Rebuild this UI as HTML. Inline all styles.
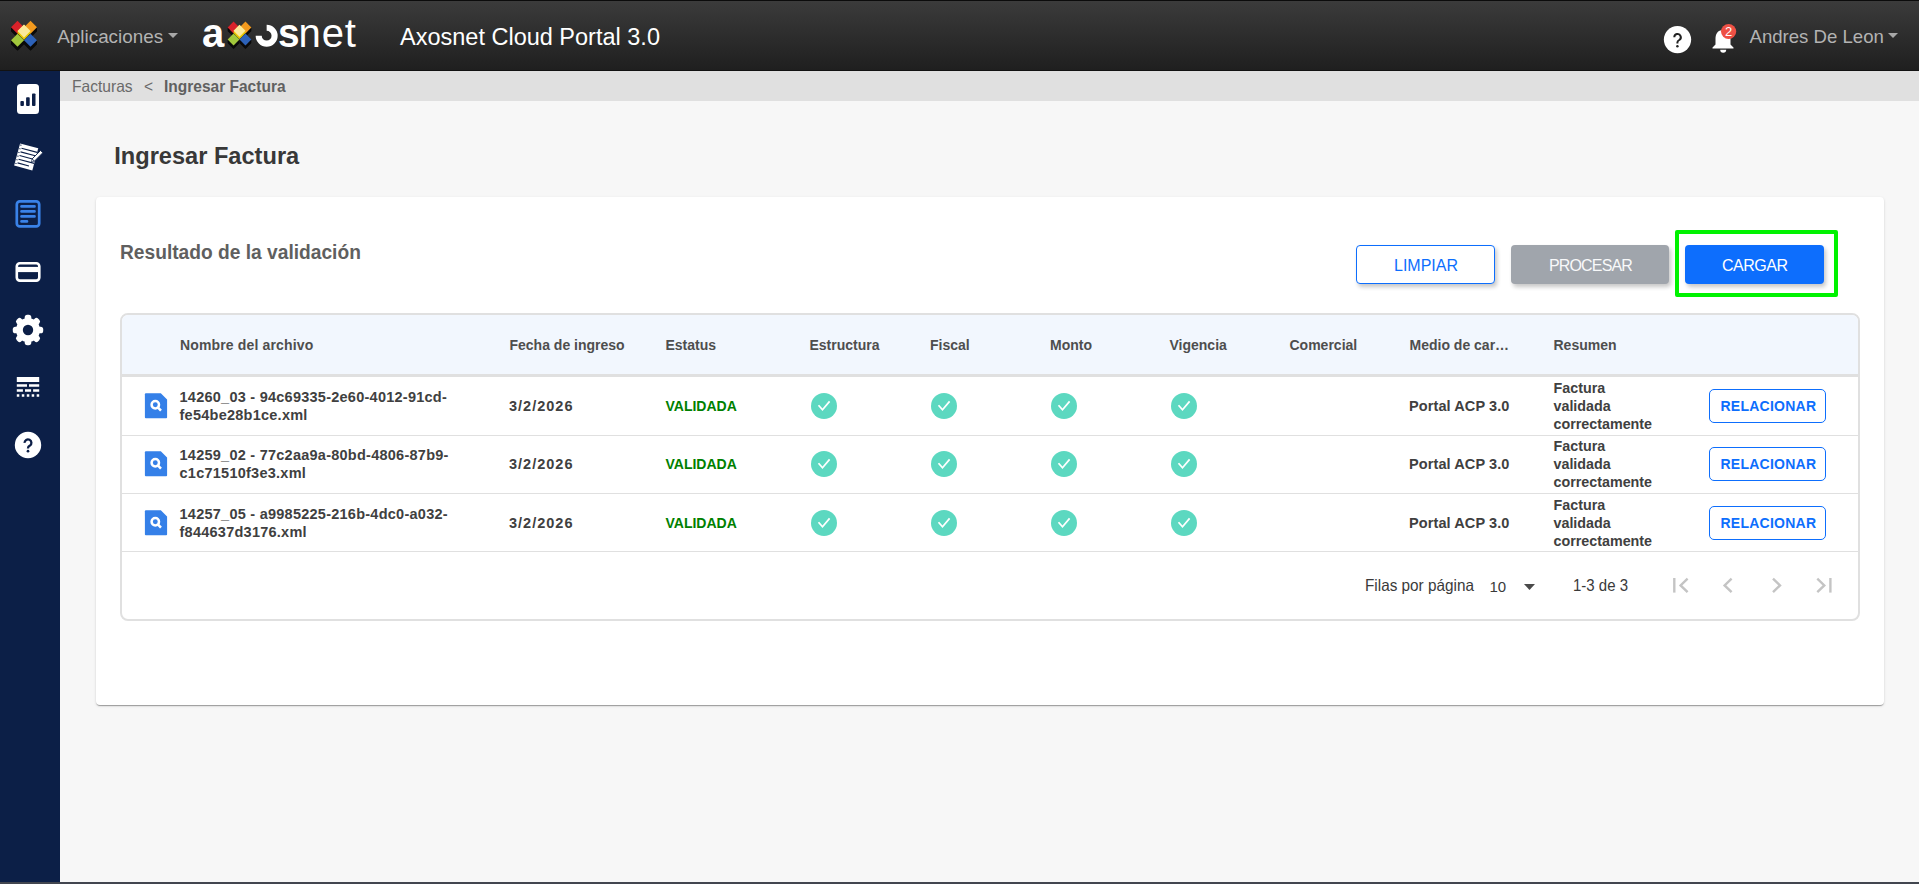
<!DOCTYPE html>
<html><head><meta charset="utf-8">
<style>
*{box-sizing:border-box;margin:0;padding:0}
html,body{width:1919px;height:884px;overflow:hidden;background:#f7f7f7;font-family:"Liberation Sans",sans-serif}
.a{position:absolute;white-space:nowrap;line-height:1}
#hdr{position:absolute;left:0;top:0;width:1919px;height:71px;background:linear-gradient(#3b3b3b,#1f1f1f);border-top:1px solid #0b0b0b;border-bottom:1px solid #121212}
#side{position:absolute;left:0;top:71px;width:60px;height:813px;background:#0c1f47}
#bc{position:absolute;left:60px;top:71px;width:1859px;height:30px;background:#e0e0e0}
#card{position:absolute;left:96px;top:197px;width:1788px;height:508px;background:#fff;border-radius:4px;box-shadow:0 2px 1px -1px rgba(0,0,0,.2),0 1px 1px 0 rgba(0,0,0,.14),0 1px 3px 0 rgba(0,0,0,.12)}
.btn{position:absolute;top:245px;height:39px;border-radius:4px;box-shadow:2px 3px 4px rgba(0,0,0,.22)}
#tbl{position:absolute;left:120px;top:313px;width:1740px;height:308px;border:2px solid #e0e0e0;border-radius:8px;overflow:hidden;background:#fff}
.th{font-weight:700;font-size:14px;color:#4e4e4e}
.td{font-weight:700;font-size:14px;color:#404040}
.rel{position:absolute;left:1709px;width:117px;height:34px;border:1.5px solid #0d6efd;border-radius:5px;background:#fff}
</style></head><body>
<div id="hdr"></div>
<div id="side"></div>
<div id="bc"></div>
<svg class="a" style="left:0;top:0" width="60" height="480" viewBox="0 0 60 480">
<rect x="17" y="84" width="22" height="30" rx="3.5" fill="#fff"/>
<g fill="#0c1f47"><rect x="20.4" y="101.1" width="3.5" height="4.8" rx="0.9"/><rect x="26.1" y="97.2" width="3.6" height="8.7" rx="0.9"/><rect x="32" y="93.4" width="3.5" height="12.5" rx="0.9"/></g>
<g transform="translate(26.2,156.9) rotate(15)">
  <rect x="-9.4" y="-11.45" width="18.8" height="22.9" fill="#fff"/>
  <path d="M-6.8 -7.2H9.4M-6.8 -3.4H9.4M-6.8 0.4H9.4M-6.8 4.2H9.4M-6.8 8H5" stroke="#0c1f47" stroke-width="1.1"/>
  <path d="M-8.2 -10.5V10.5" stroke="#0c1f47" stroke-width="1.3" stroke-dasharray="1 2.8"/>
</g>
<g transform="translate(36.2,157.1) rotate(45)">
  <rect x="-1.6" y="-7.8" width="3.2" height="12" fill="#fff" stroke="#0c1f47" stroke-width="0.9"/>
  <path d="M-1.6 4.2L0 6.8L1.6 4.2Z" fill="#fff" stroke="#0c1f47" stroke-width="0.6"/>
</g>
<rect x="16.8" y="201.4" width="22.4" height="25" rx="3" fill="none" stroke="#3a82e8" stroke-width="2.7"/>
<path d="M21.5 206.4H34.5M21.5 211.4H34.5M21.5 216.4H34.5M21.5 221.4H27" stroke="#3a82e8" stroke-width="2.7" stroke-linecap="round"/>
<rect x="16.8" y="263.3" width="22.5" height="17.3" rx="3" fill="none" stroke="#fff" stroke-width="2.6"/>
<rect x="16" y="266.9" width="24" height="5.2" fill="#fff"/>
<g transform="translate(28,330)" fill="#fff"><circle r="12"/><rect x="-3.3" y="-15.2" width="6.6" height="8" rx="2.6" transform="rotate(0)"/><rect x="-3.3" y="-15.2" width="6.6" height="8" rx="2.6" transform="rotate(45)"/><rect x="-3.3" y="-15.2" width="6.6" height="8" rx="2.6" transform="rotate(90)"/><rect x="-3.3" y="-15.2" width="6.6" height="8" rx="2.6" transform="rotate(135)"/><rect x="-3.3" y="-15.2" width="6.6" height="8" rx="2.6" transform="rotate(180)"/><rect x="-3.3" y="-15.2" width="6.6" height="8" rx="2.6" transform="rotate(225)"/><rect x="-3.3" y="-15.2" width="6.6" height="8" rx="2.6" transform="rotate(270)"/><rect x="-3.3" y="-15.2" width="6.6" height="8" rx="2.6" transform="rotate(315)"/><circle r="5.2" fill="#0c1f47"/></g>
<rect x="16.8" y="377" width="22.4" height="5" fill="#fff"/>
<path d="M16.8 385.5H27M29 385.5H39.2M16.8 390.5H22.9M25 390.5H31.1M33.1 390.5H39.2" stroke="#fff" stroke-width="2.7"/>
<path d="M16.8 395.5H19.3M21.8 395.5H24.3M26.8 395.5H29.3M31.7 395.5H34.2M36.7 395.5H39.2" stroke="#fff" stroke-width="2.7"/>
<circle cx="28" cy="445" r="13.2" fill="#fff"/>
<path d="M24.6 442.9A3.4 3.4 0 1 1 29.95 445.6Q28 446.7 28 448.2V448.5" fill="none" stroke="#0c1f47" stroke-width="2.3"/>
<circle cx="28" cy="451.2" r="1.35" fill="#0c1f47"/>
</svg>
<div class="a" style="left:0;top:882px;width:1919px;height:2px;background:#42464f"></div>

<!-- header content -->
<svg class="a" style="left:0;top:0" width="60" height="70" viewBox="0 0 60 70"><g transform="translate(24,33.7)"><g transform="translate(0,0.5) rotate(45)" fill="#0a0a0a"><rect x="-13.799999999999999" y="-4.6" width="9.2" height="9.2"/><rect x="-4.6" y="-13.799999999999999" width="9.2" height="9.2"/><rect x="-4.6" y="4.6" width="9.2" height="9.2"/><rect x="4.6" y="-4.6" width="9.2" height="9.2"/></g><g transform="translate(0,1.0) rotate(45)" fill="#0a0a0a"><rect x="-13.799999999999999" y="-4.6" width="9.2" height="9.2"/><rect x="-4.6" y="-13.799999999999999" width="9.2" height="9.2"/><rect x="-4.6" y="4.6" width="9.2" height="9.2"/><rect x="4.6" y="-4.6" width="9.2" height="9.2"/></g><g transform="translate(0,1.5) rotate(45)" fill="#0a0a0a"><rect x="-13.799999999999999" y="-4.6" width="9.2" height="9.2"/><rect x="-4.6" y="-13.799999999999999" width="9.2" height="9.2"/><rect x="-4.6" y="4.6" width="9.2" height="9.2"/><rect x="4.6" y="-4.6" width="9.2" height="9.2"/></g><g transform="translate(0,2.0) rotate(45)" fill="#0a0a0a"><rect x="-13.799999999999999" y="-4.6" width="9.2" height="9.2"/><rect x="-4.6" y="-13.799999999999999" width="9.2" height="9.2"/><rect x="-4.6" y="4.6" width="9.2" height="9.2"/><rect x="4.6" y="-4.6" width="9.2" height="9.2"/></g><g transform="translate(0,2.5) rotate(45)" fill="#0a0a0a"><rect x="-13.799999999999999" y="-4.6" width="9.2" height="9.2"/><rect x="-4.6" y="-13.799999999999999" width="9.2" height="9.2"/><rect x="-4.6" y="4.6" width="9.2" height="9.2"/><rect x="4.6" y="-4.6" width="9.2" height="9.2"/></g><g transform="translate(0,3.0) rotate(45)" fill="#0a0a0a"><rect x="-13.799999999999999" y="-4.6" width="9.2" height="9.2"/><rect x="-4.6" y="-13.799999999999999" width="9.2" height="9.2"/><rect x="-4.6" y="4.6" width="9.2" height="9.2"/><rect x="4.6" y="-4.6" width="9.2" height="9.2"/></g><g transform="translate(0,3.5) rotate(45)" fill="#0a0a0a"><rect x="-13.799999999999999" y="-4.6" width="9.2" height="9.2"/><rect x="-4.6" y="-13.799999999999999" width="9.2" height="9.2"/><rect x="-4.6" y="4.6" width="9.2" height="9.2"/><rect x="4.6" y="-4.6" width="9.2" height="9.2"/></g><g transform="translate(0,4.0) rotate(45)" fill="#0a0a0a"><rect x="-13.799999999999999" y="-4.6" width="9.2" height="9.2"/><rect x="-4.6" y="-13.799999999999999" width="9.2" height="9.2"/><rect x="-4.6" y="4.6" width="9.2" height="9.2"/><rect x="4.6" y="-4.6" width="9.2" height="9.2"/></g><g transform="rotate(45)"><rect x="-13.799999999999999" y="-4.6" width="9.2" height="9.2" fill="#d8222a"/><rect x="-4.6" y="-13.799999999999999" width="9.2" height="9.2" fill="#f39a1e"/><rect x="-4.6" y="4.6" width="9.2" height="9.2" fill="#a2c83c"/><rect x="4.6" y="-4.6" width="9.2" height="9.2" fill="#2d62b9"/></g><g transform="translate(0,-2.5) rotate(45)"><rect x="-4.6" y="-4.6" width="9.2" height="9.2" fill="#e8c800"/></g><g transform="translate(0,-2.0) rotate(45)"><rect x="-4.6" y="-4.6" width="9.2" height="9.2" fill="#e8c800"/></g><g transform="translate(0,-1.5) rotate(45)"><rect x="-4.6" y="-4.6" width="9.2" height="9.2" fill="#e8c800"/></g><g transform="translate(0,-1.0) rotate(45)"><rect x="-4.6" y="-4.6" width="9.2" height="9.2" fill="#e8c800"/></g><g transform="translate(0,-0.5) rotate(45)"><rect x="-4.6" y="-4.6" width="9.2" height="9.2" fill="#e8c800"/></g><g transform="translate(0,-2.8) rotate(45)"><rect x="-4.6" y="-4.6" width="9.2" height="9.2" fill="#fbe99a"/></g></g></svg>
<div class="a" style="left:57.3px;top:28px;font-size:18.85px;color:#b3b3b3">Aplicaciones</div>
<svg class="a" style="left:168px;top:33px" width="10" height="5"><path d="M0 0H10L5 5Z" fill="#a8a8a8"/></svg>

<!-- axosnet logo -->
<div class="a" style="left:202px;top:13px;font-size:40px;font-weight:700;color:#fff">a</div>
<svg class="a" style="left:216px;top:8.2px" width="50" height="50" viewBox="0 0 50 50"><g transform="translate(23.5,25.5)"><g transform="translate(0,0.5) rotate(45)" fill="#0a0a0a"><rect x="-12.600000000000001" y="-4.2" width="8.4" height="8.4"/><rect x="-4.2" y="-12.600000000000001" width="8.4" height="8.4"/><rect x="-4.2" y="4.2" width="8.4" height="8.4"/><rect x="4.2" y="-4.2" width="8.4" height="8.4"/></g><g transform="translate(0,1.0) rotate(45)" fill="#0a0a0a"><rect x="-12.600000000000001" y="-4.2" width="8.4" height="8.4"/><rect x="-4.2" y="-12.600000000000001" width="8.4" height="8.4"/><rect x="-4.2" y="4.2" width="8.4" height="8.4"/><rect x="4.2" y="-4.2" width="8.4" height="8.4"/></g><g transform="translate(0,1.5) rotate(45)" fill="#0a0a0a"><rect x="-12.600000000000001" y="-4.2" width="8.4" height="8.4"/><rect x="-4.2" y="-12.600000000000001" width="8.4" height="8.4"/><rect x="-4.2" y="4.2" width="8.4" height="8.4"/><rect x="4.2" y="-4.2" width="8.4" height="8.4"/></g><g transform="translate(0,2.0) rotate(45)" fill="#0a0a0a"><rect x="-12.600000000000001" y="-4.2" width="8.4" height="8.4"/><rect x="-4.2" y="-12.600000000000001" width="8.4" height="8.4"/><rect x="-4.2" y="4.2" width="8.4" height="8.4"/><rect x="4.2" y="-4.2" width="8.4" height="8.4"/></g><g transform="translate(0,2.5) rotate(45)" fill="#0a0a0a"><rect x="-12.600000000000001" y="-4.2" width="8.4" height="8.4"/><rect x="-4.2" y="-12.600000000000001" width="8.4" height="8.4"/><rect x="-4.2" y="4.2" width="8.4" height="8.4"/><rect x="4.2" y="-4.2" width="8.4" height="8.4"/></g><g transform="translate(0,3.0) rotate(45)" fill="#0a0a0a"><rect x="-12.600000000000001" y="-4.2" width="8.4" height="8.4"/><rect x="-4.2" y="-12.600000000000001" width="8.4" height="8.4"/><rect x="-4.2" y="4.2" width="8.4" height="8.4"/><rect x="4.2" y="-4.2" width="8.4" height="8.4"/></g><g transform="translate(0,3.5) rotate(45)" fill="#0a0a0a"><rect x="-12.600000000000001" y="-4.2" width="8.4" height="8.4"/><rect x="-4.2" y="-12.600000000000001" width="8.4" height="8.4"/><rect x="-4.2" y="4.2" width="8.4" height="8.4"/><rect x="4.2" y="-4.2" width="8.4" height="8.4"/></g><g transform="rotate(45)"><rect x="-12.600000000000001" y="-4.2" width="8.4" height="8.4" fill="#d8222a"/><rect x="-4.2" y="-12.600000000000001" width="8.4" height="8.4" fill="#f39a1e"/><rect x="-4.2" y="4.2" width="8.4" height="8.4" fill="#a2c83c"/><rect x="4.2" y="-4.2" width="8.4" height="8.4" fill="#2d62b9"/></g><g transform="translate(0,-2.5) rotate(45)"><rect x="-4.2" y="-4.2" width="8.4" height="8.4" fill="#e8c800"/></g><g transform="translate(0,-2.0) rotate(45)"><rect x="-4.2" y="-4.2" width="8.4" height="8.4" fill="#e8c800"/></g><g transform="translate(0,-1.5) rotate(45)"><rect x="-4.2" y="-4.2" width="8.4" height="8.4" fill="#e8c800"/></g><g transform="translate(0,-1.0) rotate(45)"><rect x="-4.2" y="-4.2" width="8.4" height="8.4" fill="#e8c800"/></g><g transform="translate(0,-0.5) rotate(45)"><rect x="-4.2" y="-4.2" width="8.4" height="8.4" fill="#e8c800"/></g><g transform="translate(0,-2.8) rotate(45)"><rect x="-4.2" y="-4.2" width="8.4" height="8.4" fill="#fbe99a"/></g></g></svg>
<svg class="a" style="left:250px;top:20px" width="34" height="32" viewBox="250 20 34 32">
  <path d="M258.7 35.7A7.95 7.95 0 1 0 266.65 27.75" fill="none" stroke="#fff" stroke-width="6.1"/>
</svg>
<div class="a" style="left:277.5px;top:13px;font-size:40px;font-weight:700;color:#fff;display:inline-block;transform:scaleX(0.97);transform-origin:0 0">s</div>
<div class="a" style="left:298.5px;top:13px;font-size:40px;color:#fff;letter-spacing:0.9px">net</div>

<div class="a" style="left:400px;top:26.2px;font-size:23.5px;color:#fff">Axosnet Cloud Portal 3.0</div>

<!-- right header -->
<svg class="a" style="left:1660px;top:22px" width="36" height="36" viewBox="0 0 36 36">
  <circle cx="17.5" cy="17.6" r="13.65" fill="#fff"/>
  <path d="M14.3 15.3A3.25 3.25 0 1 1 19.2 18Q17.4 19 17.4 20.5V21.4" fill="none" stroke="#222" stroke-width="2"/>
  <circle cx="17.4" cy="24.2" r="1.25" fill="#222"/>
</svg>
<svg class="a" style="left:1705px;top:18px" width="40" height="40" viewBox="0 0 40 40">
  <path d="M18 12C12.5 12 10.5 16 10.5 21V26.5L7.5 29.5V30.5H28.5V29.5L25.5 26.5V21C25.5 16 23.5 12 18 12Z" fill="#fff"/>
  <path d="M15.2 31.8H21.2A3 3 0 0 1 15.2 31.8Z" fill="#fff"/>
  <circle cx="23.6" cy="13.5" r="7.6" fill="#ee5045"/>
  <text x="23.7" y="18.1" font-family="Liberation Sans" font-size="13" font-weight="400" fill="#fff" text-anchor="middle">2</text>
</svg>
<div class="a" style="left:1749.5px;top:28.2px;font-size:18.6px;color:#b3b3b3">Andres De Leon</div>
<svg class="a" style="left:1888px;top:33px" width="10" height="5"><path d="M0 0H10L5 5Z" fill="#a8a8a8"/></svg>

<!-- breadcrumb -->
<div class="a" style="left:71.7px;top:78px;font-size:16.5px;color:#6a6a6a;transform:scaleX(0.944);transform-origin:0 0">Facturas</div>
<div class="a" style="left:143.7px;top:78px;font-size:16.5px;color:#6a6a6a;transform:scaleX(0.944);transform-origin:0 0">&lt;</div>
<div class="a" style="left:164px;top:78px;font-size:16.5px;font-weight:700;color:#606060;transform:scaleX(0.94);transform-origin:0 0">Ingresar Factura</div>

<div class="a" style="left:114.3px;top:145.2px;font-size:23.6px;font-weight:700;color:#383838">Ingresar Factura</div>

<div id="card"></div>
<div class="a" style="left:120.2px;top:242px;font-size:20px;font-weight:700;color:#5f5f5f;transform:scaleX(0.959);transform-origin:0 0">Resultado de la validación</div>

<!-- buttons -->
<div class="btn" style="left:1356px;width:139px;border:1px solid #0d6efd;background:#fff"></div>
<div class="a" style="left:1394px;top:258.4px;font-size:16px;color:#0d6efd">LIMPIAR</div>
<div class="btn" style="left:1511px;width:158px;background:#a0a5ac"></div>
<div class="a" style="left:1549px;top:258.4px;font-size:16px;color:#f8f9fa;letter-spacing:-0.85px">PROCESAR</div>
<div class="btn" style="left:1685px;width:139px;background:#0d6efd"></div>
<div class="a" style="left:1722px;top:258.4px;font-size:16px;color:#fff;letter-spacing:-0.5px">CARGAR</div>
<div class="a" style="left:1675px;top:230px;width:163px;height:67px;border:4.6px solid #00f200;border-radius:2px"></div>

<!-- table -->
<div id="tbl">
  <div style="position:absolute;left:0;top:0;width:1736px;height:62px;background:#f2f7fe;border-bottom:3px solid #e0e0e0"></div>
  <div style="position:absolute;left:0;top:120px;width:1736px;height:1px;background:#e0e0e0"></div>
  <div style="position:absolute;left:0;top:178px;width:1736px;height:1px;background:#e0e0e0"></div>
  <div style="position:absolute;left:0;top:236px;width:1736px;height:1px;background:#e0e0e0"></div>
</div>
<!-- table content -->
<div class="a th" style="left:180px;top:338.1px;letter-spacing:0.15px">Nombre del archivo</div>
<div class="a th" style="left:509.5px;top:338.1px">Fecha de ingreso</div>
<div class="a th" style="left:665.5px;top:338.1px">Estatus</div>
<div class="a th" style="left:809.5px;top:338.1px">Estructura</div>
<div class="a th" style="left:930px;top:338.1px">Fiscal</div>
<div class="a th" style="left:1050px;top:338.1px">Monto</div>
<div class="a th" style="left:1169.5px;top:338.1px">Vigencia</div>
<div class="a th" style="left:1289.5px;top:338.1px">Comercial</div>
<div class="a th" style="left:1409.5px;top:338.1px">Medio de car…</div>
<div class="a th" style="left:1553.5px;top:338.1px">Resumen</div>
<svg class="a" style="left:144px;top:392.2px" width="24" height="28" viewBox="0 0 24 28"><path d="M1.9 1.3H16.8L23.1 7.6V25.3Q23.1 26.3 22.1 26.3H1.9Q0.9 26.3 0.9 25.3V2.3Q0.9 1.3 1.9 1.3Z" fill="#3580e8"/><circle cx="11.3" cy="12.7" r="3.7" fill="none" stroke="#fff" stroke-width="2.5"/><path d="M13.8 15.4L17 18.6" stroke="#fff" stroke-width="2.6"/></svg>
<div class="a td" style="left:179.5px;top:390.0px;font-size:14.5px;letter-spacing:0.25px">14260_03 - 94c69335-2e60-4012-91cd-</div>
<div class="a td" style="left:179.5px;top:407.7px;font-size:14.5px;letter-spacing:0.25px">fe54be28b1ce.xml</div>
<div class="a td" style="left:509px;top:399.4px;font-size:14.5px;letter-spacing:1px">3/2/2026</div>
<div class="a td" style="left:665.5px;top:398.8px;font-size:14px;color:#008000">VALIDADA</div>
<svg class="a" style="left:811px;top:393.2px" width="26" height="26" viewBox="-13 -13 26 26"><circle r="13" fill="#5cd8c0"/><path d="M-5.5 -0.8L-1.5 3.8L5.6 -4.6" fill="none" stroke="#fff" stroke-width="1.7"/></svg>
<svg class="a" style="left:931px;top:393.2px" width="26" height="26" viewBox="-13 -13 26 26"><circle r="13" fill="#5cd8c0"/><path d="M-5.5 -0.8L-1.5 3.8L5.6 -4.6" fill="none" stroke="#fff" stroke-width="1.7"/></svg>
<svg class="a" style="left:1051px;top:393.2px" width="26" height="26" viewBox="-13 -13 26 26"><circle r="13" fill="#5cd8c0"/><path d="M-5.5 -0.8L-1.5 3.8L5.6 -4.6" fill="none" stroke="#fff" stroke-width="1.7"/></svg>
<svg class="a" style="left:1171px;top:393.2px" width="26" height="26" viewBox="-13 -13 26 26"><circle r="13" fill="#5cd8c0"/><path d="M-5.5 -0.8L-1.5 3.8L5.6 -4.6" fill="none" stroke="#fff" stroke-width="1.7"/></svg>
<div class="a td" style="left:1409px;top:399.4px;font-size:14.5px;letter-spacing:0.1px">Portal ACP 3.0</div>
<div class="a td" style="left:1553.5px;top:381.3px;font-size:14.3px">Factura</div>
<div class="a td" style="left:1553.5px;top:399.3px;font-size:14.3px">validada</div>
<div class="a td" style="left:1553.5px;top:417.1px;font-size:14.3px">correctamente</div>
<div class="rel" style="top:389.2px"></div>
<div class="a" style="left:1720.5px;top:399.1px;font-size:14px;font-weight:700;color:#0d6efd;letter-spacing:0.25px">RELACIONAR</div>
<svg class="a" style="left:144px;top:450.2px" width="24" height="28" viewBox="0 0 24 28"><path d="M1.9 1.3H16.8L23.1 7.6V25.3Q23.1 26.3 22.1 26.3H1.9Q0.9 26.3 0.9 25.3V2.3Q0.9 1.3 1.9 1.3Z" fill="#3580e8"/><circle cx="11.3" cy="12.7" r="3.7" fill="none" stroke="#fff" stroke-width="2.5"/><path d="M13.8 15.4L17 18.6" stroke="#fff" stroke-width="2.6"/></svg>
<div class="a td" style="left:179.5px;top:448.0px;font-size:14.5px;letter-spacing:0.25px">14259_02 - 77c2aa9a-80bd-4806-87b9-</div>
<div class="a td" style="left:179.5px;top:465.7px;font-size:14.5px;letter-spacing:0.25px">c1c71510f3e3.xml</div>
<div class="a td" style="left:509px;top:457.4px;font-size:14.5px;letter-spacing:1px">3/2/2026</div>
<div class="a td" style="left:665.5px;top:456.8px;font-size:14px;color:#008000">VALIDADA</div>
<svg class="a" style="left:811px;top:451.2px" width="26" height="26" viewBox="-13 -13 26 26"><circle r="13" fill="#5cd8c0"/><path d="M-5.5 -0.8L-1.5 3.8L5.6 -4.6" fill="none" stroke="#fff" stroke-width="1.7"/></svg>
<svg class="a" style="left:931px;top:451.2px" width="26" height="26" viewBox="-13 -13 26 26"><circle r="13" fill="#5cd8c0"/><path d="M-5.5 -0.8L-1.5 3.8L5.6 -4.6" fill="none" stroke="#fff" stroke-width="1.7"/></svg>
<svg class="a" style="left:1051px;top:451.2px" width="26" height="26" viewBox="-13 -13 26 26"><circle r="13" fill="#5cd8c0"/><path d="M-5.5 -0.8L-1.5 3.8L5.6 -4.6" fill="none" stroke="#fff" stroke-width="1.7"/></svg>
<svg class="a" style="left:1171px;top:451.2px" width="26" height="26" viewBox="-13 -13 26 26"><circle r="13" fill="#5cd8c0"/><path d="M-5.5 -0.8L-1.5 3.8L5.6 -4.6" fill="none" stroke="#fff" stroke-width="1.7"/></svg>
<div class="a td" style="left:1409px;top:457.4px;font-size:14.5px;letter-spacing:0.1px">Portal ACP 3.0</div>
<div class="a td" style="left:1553.5px;top:439.3px;font-size:14.3px">Factura</div>
<div class="a td" style="left:1553.5px;top:457.3px;font-size:14.3px">validada</div>
<div class="a td" style="left:1553.5px;top:475.1px;font-size:14.3px">correctamente</div>
<div class="rel" style="top:447.2px"></div>
<div class="a" style="left:1720.5px;top:457.1px;font-size:14px;font-weight:700;color:#0d6efd;letter-spacing:0.25px">RELACIONAR</div>
<svg class="a" style="left:144px;top:509.2px" width="24" height="28" viewBox="0 0 24 28"><path d="M1.9 1.3H16.8L23.1 7.6V25.3Q23.1 26.3 22.1 26.3H1.9Q0.9 26.3 0.9 25.3V2.3Q0.9 1.3 1.9 1.3Z" fill="#3580e8"/><circle cx="11.3" cy="12.7" r="3.7" fill="none" stroke="#fff" stroke-width="2.5"/><path d="M13.8 15.4L17 18.6" stroke="#fff" stroke-width="2.6"/></svg>
<div class="a td" style="left:179.5px;top:507.0px;font-size:14.5px;letter-spacing:0.25px">14257_05 - a9985225-216b-4dc0-a032-</div>
<div class="a td" style="left:179.5px;top:524.7px;font-size:14.5px;letter-spacing:0.25px">f844637d3176.xml</div>
<div class="a td" style="left:509px;top:516.4px;font-size:14.5px;letter-spacing:1px">3/2/2026</div>
<div class="a td" style="left:665.5px;top:515.8px;font-size:14px;color:#008000">VALIDADA</div>
<svg class="a" style="left:811px;top:510.2px" width="26" height="26" viewBox="-13 -13 26 26"><circle r="13" fill="#5cd8c0"/><path d="M-5.5 -0.8L-1.5 3.8L5.6 -4.6" fill="none" stroke="#fff" stroke-width="1.7"/></svg>
<svg class="a" style="left:931px;top:510.2px" width="26" height="26" viewBox="-13 -13 26 26"><circle r="13" fill="#5cd8c0"/><path d="M-5.5 -0.8L-1.5 3.8L5.6 -4.6" fill="none" stroke="#fff" stroke-width="1.7"/></svg>
<svg class="a" style="left:1051px;top:510.2px" width="26" height="26" viewBox="-13 -13 26 26"><circle r="13" fill="#5cd8c0"/><path d="M-5.5 -0.8L-1.5 3.8L5.6 -4.6" fill="none" stroke="#fff" stroke-width="1.7"/></svg>
<svg class="a" style="left:1171px;top:510.2px" width="26" height="26" viewBox="-13 -13 26 26"><circle r="13" fill="#5cd8c0"/><path d="M-5.5 -0.8L-1.5 3.8L5.6 -4.6" fill="none" stroke="#fff" stroke-width="1.7"/></svg>
<div class="a td" style="left:1409px;top:516.4px;font-size:14.5px;letter-spacing:0.1px">Portal ACP 3.0</div>
<div class="a td" style="left:1553.5px;top:498.3px;font-size:14.3px">Factura</div>
<div class="a td" style="left:1553.5px;top:516.3px;font-size:14.3px">validada</div>
<div class="a td" style="left:1553.5px;top:534.1px;font-size:14.3px">correctamente</div>
<div class="rel" style="top:506.2px"></div>
<div class="a" style="left:1720.5px;top:516.1px;font-size:14px;font-weight:700;color:#0d6efd;letter-spacing:0.25px">RELACIONAR</div>
<div class="a" style="left:1365px;top:577px;font-size:16.5px;color:#3a3a3a;transform:scaleX(0.928);transform-origin:0 0">Filas por página</div>
<div class="a" style="left:1489.5px;top:578.8px;font-size:15px;color:#3a3a3a">10</div>
<svg class="a" style="left:1524px;top:584px" width="11" height="6"><path d="M0 0H11L5.5 6Z" fill="#4a4a4a"/></svg>
<div class="a" style="left:1572.5px;top:577px;font-size:16.5px;color:#3a3a3a;transform:scaleX(0.908);transform-origin:0 0">1-3 de 3</div>
<svg class="a" style="left:1665px;top:570px" width="180" height="30" viewBox="1665 570 180 30" fill="none" stroke="#c4c4c4" stroke-width="2.4"><path d="M1674.3 578V592.6"/><path d="M1687.6 578.6L1680.6 585.4L1687.6 592.2"/><path d="M1731.6 578.6L1724.6 585.4L1731.6 592.2"/><path d="M1773 578.6L1780 585.4L1773 592.2"/><path d="M1817.3 578.6L1824.3 585.4L1817.3 592.2"/><path d="M1830.4 578V592.6"/></svg>
</body></html>
